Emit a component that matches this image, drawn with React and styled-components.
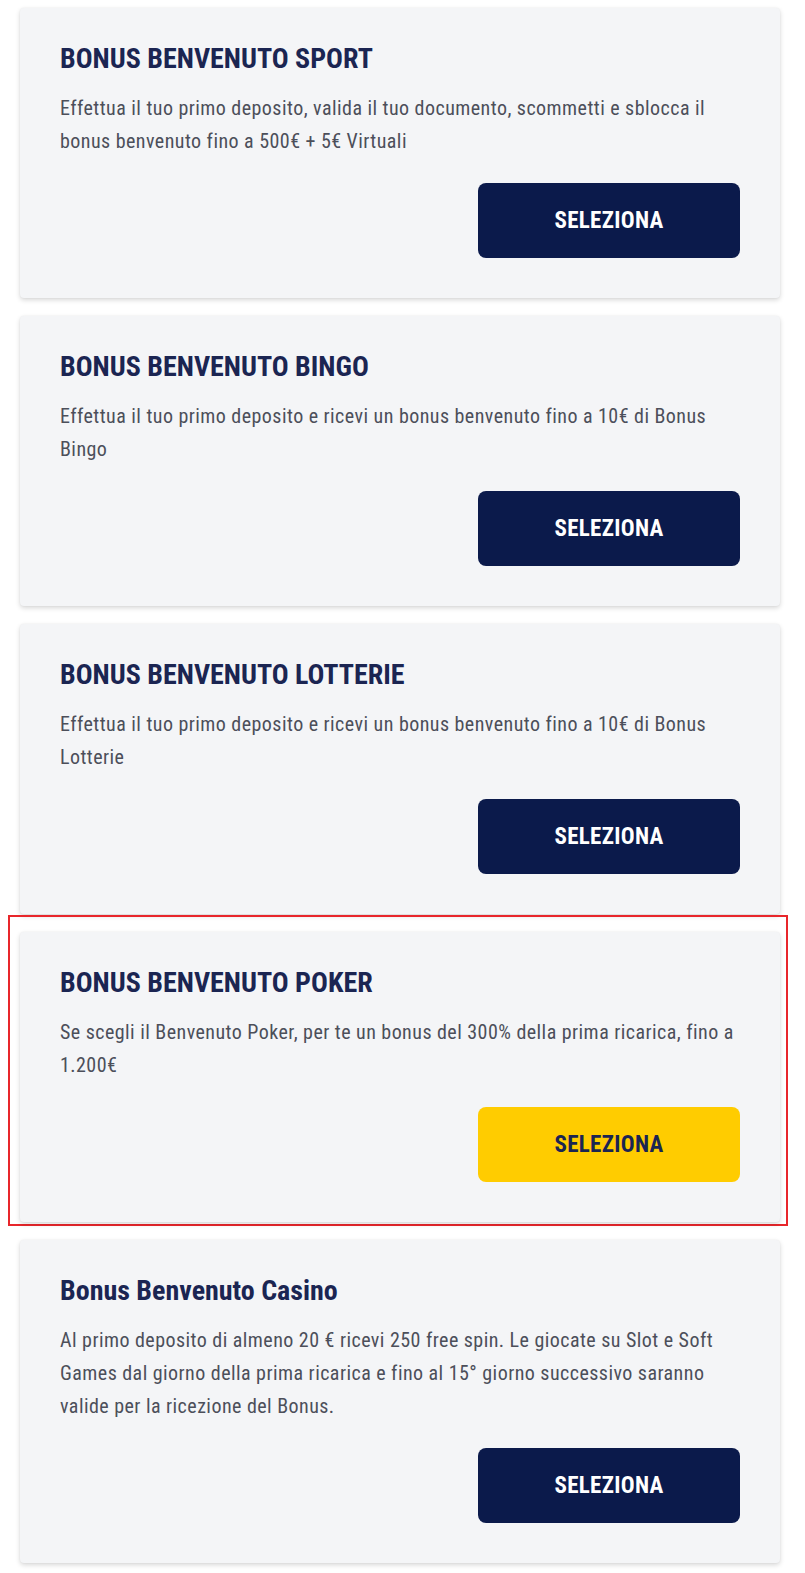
import React from "react";
import styled, { createGlobalStyle } from "styled-components";

const GlobalStyle = createGlobalStyle`
  html, body {
    margin: 0;
    padding: 0;
    background: #ffffff;
  }
  * {
    box-sizing: border-box;
  }
`;

const Page = styled.div`
  display: flex;
  flex-direction: column;
  gap: 18px;
  width: 805px;
  padding: 8px 25px 14px 20px;
  font-family: "Roboto Condensed", "Liberation Sans Narrow", Roboto, sans-serif;
`;

// red frame drawn around the chosen offer, card keeps its place in the flow
const Highlight = styled.div`
  margin: -17px -8px -4px -12px;
  padding: 15px 6px 2px 10px;
  border: 2px solid #e8262b;
`;

const Card = styled.div`
  display: flex;
  flex-direction: column;
  padding: 35px 40px 40px 40px;
  background: #f4f5f7;
  border-radius: 4px;
  box-shadow: 0 2px 5px rgba(0, 0, 0, 0.16), 0 0 2px rgba(0, 0, 0, 0.06);
`;

const Title = styled.h2`
  margin: 0;
  font-size: 28px;
  line-height: 32px;
  font-weight: 700;
  color: #1b2552;
`;

const Text = styled.p`
  margin: 17px 0 0 0;
  font-size: 20px;
  letter-spacing: 0.45px;
  line-height: 33px;
  color: #4c4f5a;
`;

const Actions = styled.div`
  display: flex;
  justify-content: flex-end;
  margin-top: 25px;
`;

const Button = styled.button`
  width: 262px;
  height: 75px;
  border: none;
  border-radius: 8px;
  background: ${(p) => (p.$primary ? "#ffcc00" : "#0b1a4b")};
  color: ${(p) => (p.$primary ? "#1b2552" : "#ffffff")};
  font-family: inherit;
  font-size: 23px;
  letter-spacing: 0.3px;
  font-weight: 700;
  cursor: pointer;
`;

const bonuses = [
  {
    title: "BONUS BENVENUTO SPORT",
    text: "Effettua il tuo primo deposito, valida il tuo documento, scommetti e sblocca il bonus benvenuto fino a 500€ + 5€ Virtuali",
  },
  {
    title: "BONUS BENVENUTO BINGO",
    text: "Effettua il tuo primo deposito e ricevi un bonus benvenuto fino a 10€ di Bonus Bingo",
  },
  {
    title: "BONUS BENVENUTO LOTTERIE",
    text: "Effettua il tuo primo deposito e ricevi un bonus benvenuto fino a 10€ di Bonus Lotterie",
  },
  {
    title: "BONUS BENVENUTO POKER",
    text: "Se scegli il Benvenuto Poker, per te un bonus del 300% della prima ricarica, fino a 1.200€",
    selected: true,
  },
  {
    title: "Bonus Benvenuto Casino",
    text: "Al primo deposito di almeno 20 € ricevi 250 free spin. Le giocate su Slot e Soft Games dal giorno della prima ricarica e fino al 15° giorno successivo saranno valide per la ricezione del Bonus.",
  },
];

function BonusCard({ bonus }) {
  return (
    <Card>
      <Title>{bonus.title}</Title>
      <Text>{bonus.text}</Text>
      <Actions>
        <Button $primary={bonus.selected}>SELEZIONA</Button>
      </Actions>
    </Card>
  );
}

export default function App() {
  return (
    <>
      <GlobalStyle />
      <Page>
        {bonuses.map((b) =>
          b.selected ? (
            <Highlight key={b.title}>
              <BonusCard bonus={b} />
            </Highlight>
          ) : (
            <BonusCard key={b.title} bonus={b} />
          )
        )}
      </Page>
    </>
  );
}
